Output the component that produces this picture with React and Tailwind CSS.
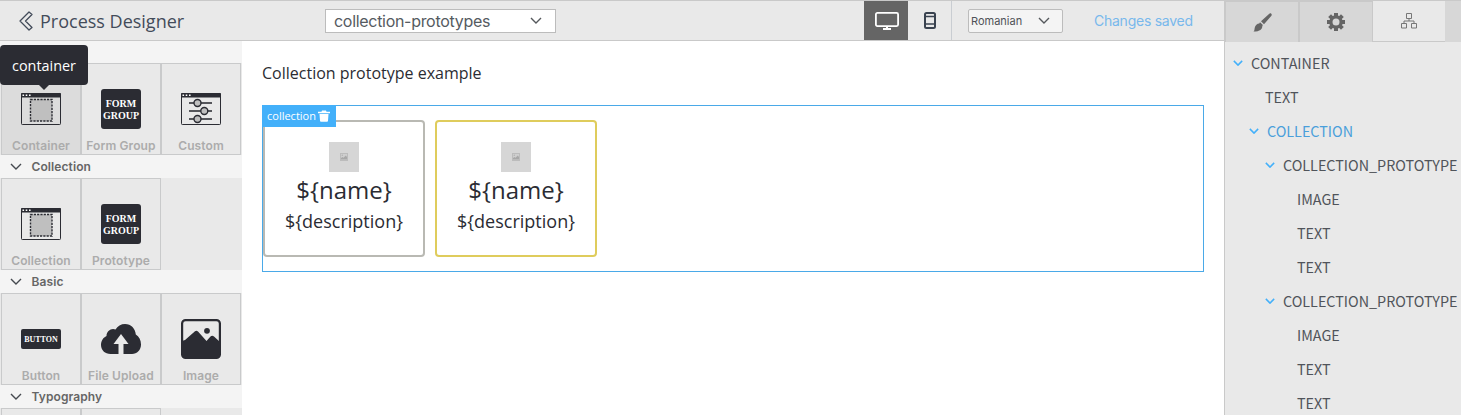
import React from "react";

function Chevron({ className = "", w = 12, h = 7, sw = 1.4 }) {
  return (
    <svg width={w} height={h} viewBox="0 0 12 7" fill="none" className={"shrink-0 " + className} preserveAspectRatio="none">
      <path d="M1 1l5 5 5-5" stroke="currentColor" strokeWidth={sw} />
    </svg>
  );
}

function WindowFrame({ children }) {
  return (
    <svg width="40" height="40" viewBox="0 0 40 40" fill="none">
      <rect x="0.5" y="4.5" width="39" height="31" rx="0.8" stroke="#2b2c33" />
      <rect x="0" y="4" width="40" height="4.6" rx="1" fill="#2b2c33" />
      <path d="M1.5 6.2h1.6M4.7 6.2h1.6M8 6.2h1.6" stroke="#fff" strokeWidth="1.4" />
      {children}
    </svg>
  );
}

function ContainerIcon() {
  return (
    <WindowFrame>
      <rect x="9.5" y="10.5" width="21.5" height="21.5" fill="#bfbfbf" stroke="#2b2c33" strokeWidth="1.4" strokeDasharray="2.2 1.1" />
    </WindowFrame>
  );
}

function CustomIcon() {
  return (
    <WindowFrame>
      <path d="M8 14h23M8 22h23M8 30h23" stroke="#55565b" strokeWidth="1.9" />
      <g fill="#bfbfbf" stroke="#2b2c33" strokeWidth="1.4">
        <circle cx="16.5" cy="14" r="3.5" />
        <circle cx="23.3" cy="22" r="3.5" />
        <circle cx="16.5" cy="30" r="3.5" />
      </g>
    </WindowFrame>
  );
}

function FormGroupIcon() {
  return (
    <div className="flex h-10 w-10 flex-col items-center justify-center rounded-[3px] bg-[#2b2c33] pt-[2px] font-['Liberation_Serif',serif] text-[10px] leading-3 font-bold text-white">
      <span>FORM</span>
      <span>GROUP</span>
    </div>
  );
}

function ButtonIcon() {
  return (
    <div className="flex h-5 w-10 items-center justify-center rounded-[2px] bg-[#2b2c33] pt-px font-['Liberation_Serif',serif] text-[8px] leading-5 font-bold text-white">
      BUTTON
    </div>
  );
}

function UploadIcon() {
  return (
    <svg width="40" height="40" viewBox="0 0 40 40">
      <path
        fill="#2b2c33"
        d="M9.500 35C4 35 0 31 0 26c0-4.300 2.300-7.500 5.500-9C5.500 12 10.500 8.500 14.500 10.500 16.500 7 20 5 24 5c6 0 10.500 4.700 10.800 10.500C38 17.500 40 21 40 25.500 40 31 36 35 31 35h-8.500V25H27.500L20 15l-7.500 10h5V35z"
      />
    </svg>
  );
}

function ImageIcon() {
  return (
    <svg width="40" height="40" viewBox="0 0 40 40">
      <rect x="1.100" y="1.100" width="37.800" height="37.800" rx="3.500" fill="none" stroke="#2b2c33" strokeWidth="2.200" />
      <path fill="#2b2c33" d="M1 22l3-1L14 12.300q1.500-1 3 .3L25.500 22l4-4.500q1.700-1.500 3.500 0L39 23v12q0 4-4 4H5q-4 0-4-4z" />
      <circle cx="26" cy="11.800" r="2.900" fill="#2b2c33" />
    </svg>
  );
}

function Tile({ label, icon, active }) {
  return (
    <div
      className={
        "flex h-[92px] w-20 shrink-0 flex-col items-center border border-[#c9cacb] " +
        (active ? "bg-[#dcdcdc]" : "bg-[#e9e9e9]")
      }
    >
      <div className="mt-[25px] flex h-10 w-10 items-center justify-center">{icon}</div>
      <div className="mt-[9px] text-[12px] leading-4 font-semibold tracking-[0.1px] whitespace-nowrap text-[#acacac]">{label}</div>
    </div>
  );
}

function Category({ name }) {
  return (
    <div className="flex h-[23px] items-center pl-[10px] text-[#666]">
      <Chevron w={12} h={7} className="text-[#45494f]" />
      <span className="ml-[9.5px] text-[12px] leading-4 font-semibold tracking-[0.1px]">{name}</span>
    </div>
  );
}

function TileRow({ children }) {
  return <div className="flex h-[92px] bg-[#e9e9e9] pl-px">{children}</div>;
}

function Prototype({ border }) {
  return (
    <div className={"flex h-[137px] w-[162px] flex-col items-center rounded-[4px] border-2 pt-5 text-[#2b2c33] " + border}>
      <div className="flex h-[30px] w-[30px] items-center justify-center bg-[#d6d6d6]">
        <svg width="8" height="8" viewBox="0 0 8 8">
          <rect x="0.500" y="0.500" width="7" height="7" fill="#cfcfcf" stroke="#bcbcbc" />
          <path d="M1 6.500V5l1.500-1 1 .8L5.800 2.500 7 4v2.500z" fill="#a8a8a8" />
          <circle cx="2.300" cy="2.300" r="0.700" fill="#b0b0b0" />
        </svg>
      </div>
      <div className="mt-px text-[24px] leading-[34px]">{"${name}"}</div>
      <div className="mt-px text-[18px] leading-[26px]">{"${description}"}</div>
    </div>
  );
}

const tree = [
  { label: "CONTAINER", pad: "pl-[8px]", open: true },
  { label: "TEXT", pad: "pl-[40px]" },
  { label: "COLLECTION", pad: "pl-[24px]", open: true, active: true },
  { label: "COLLECTION_PROTOTYPE", pad: "pl-[40px]", open: true },
  { label: "IMAGE", pad: "pl-[72px]" },
  { label: "TEXT", pad: "pl-[72px]" },
  { label: "TEXT", pad: "pl-[72px]" },
  { label: "COLLECTION_PROTOTYPE", pad: "pl-[40px]", open: true },
  { label: "IMAGE", pad: "pl-[72px]" },
  { label: "TEXT", pad: "pl-[72px]" },
  { label: "TEXT", pad: "pl-[72px]" },
];

function Header() {
  return (
    <header className="flex h-[41px] items-center border-y border-[#c9c9c9] bg-[#e9e9e9]">
      <div className="flex w-[325px] items-center pl-[19px]">
        <svg width="14" height="20" viewBox="0 0 14 20" fill="none">
          <path d="M10 1L1 10l9 9 3-2.500L6.500 10 13 3.500z" stroke="#434c5a" strokeWidth="1.300" strokeLinejoin="round" />
        </svg>
        <span className="ml-[7px] font-['Open_Sans',sans-serif] text-[18px] leading-6 text-[#434c5a]">Process Designer</span>
      </div>
      <div className="flex h-6 w-[231px] items-center justify-between border border-[#bcbcbc] bg-white pr-[13px] pl-2">
        <span className="text-[16px] leading-5 tracking-[-0.3px] text-[#555b61]">collection-prototypes</span>
        <Chevron className="text-[#55585c]" />
      </div>
      <div className="ml-[308px] flex h-[39px] w-11 items-center justify-center bg-[#656565] pl-[2px]">
        <svg width="24" height="18" viewBox="0 0 24 18" fill="none" className="mt-px">
          <rect x="0.900" y="0.900" width="22.200" height="13.200" rx="1.500" stroke="#fff" strokeWidth="1.800" />
          <path d="M12 14v2.500M8 17h8" stroke="#fff" strokeWidth="2" />
        </svg>
      </div>
      <div className="flex h-[39px] w-11 items-center justify-center border-r border-[#c9cdd2]">
        <svg width="12" height="17" viewBox="0 0 12 17" fill="none">
          <rect x="1" y="1" width="10" height="15" rx="1.500" stroke="#39424f" strokeWidth="2" />
          <path d="M1 4.500h10M1 12h10" stroke="#39424f" strokeWidth="1.300" />
        </svg>
      </div>
      <div className="ml-4 flex h-6 w-[95px] items-center justify-between rounded-[2px] border border-[#bcbcbc] bg-[#f4f4f4] pr-3 pl-[2px]">
        <span className="text-[11px] leading-4 text-[#4f5257]">Romanian</span>
        <Chevron w={12} className="text-[#55585c]" />
      </div>
      <div className="ml-[31px] text-[14px] leading-5 tracking-[-0.25px] text-[#78b8ec]">Changes saved</div>
    </header>
  );
}

export default function App() {
  return (
    <div className="flex h-[415px] w-[1461px] overflow-hidden bg-white font-['Inter',sans-serif]">
      <div className="flex w-[1224px] shrink-0 flex-col">
        <Header />
        <div className="flex min-h-0 flex-1">
          <aside className="relative h-[374px] w-[242px] shrink-0 overflow-hidden bg-[#f4f4f4] pt-[22px]">
            <TileRow>
              <Tile label="Container" icon={<ContainerIcon />} active />
              <Tile label="Form Group" icon={<FormGroupIcon />} />
              <Tile label="Custom" icon={<CustomIcon />} />
            </TileRow>
            <Category name="Collection" />
            <TileRow>
              <Tile label="Collection" icon={<ContainerIcon />} />
              <Tile label="Prototype" icon={<FormGroupIcon />} />
            </TileRow>
            <Category name="Basic" />
            <TileRow>
              <Tile label="Button" icon={<ButtonIcon />} />
              <Tile label="File Upload" icon={<UploadIcon />} />
              <Tile label="Image" icon={<ImageIcon />} />
            </TileRow>
            <Category name="Typography" />
            <TileRow>
              <Tile />
              <Tile />
            </TileRow>
            <div className="absolute top-1 left-0 flex h-10 w-[88px] items-center justify-center rounded-[4px] bg-[#2b2c33] pt-[2px] font-['Open_Sans',sans-serif] text-[14.4px] text-white">
              container
              <svg width="10" height="5" viewBox="0 0 10 5" className="absolute top-10 left-[39px]">
                <path d="M0 0h10L5 5z" fill="#2b2c33" />
              </svg>
            </div>
          </aside>
          <main className="w-[982px] pt-5 pl-5 font-['Open_Sans',sans-serif]">
            <h1 className="text-[16px] leading-6 text-[#2b2c33]">Collection prototype example</h1>
            <section className="relative mt-5 flex h-[167px] w-[942px] gap-[10px] border border-[#4aa9e8] pt-[14px]">
              <Prototype border="border-[#b9b9b3]" />
              <Prototype border="border-[#dfcc5c]" />
              <div className="absolute -top-px -left-px flex h-[22px] w-[74px] items-center bg-[#43b0fa] pl-[5px] text-[11px] text-white">
                collection
                <svg width="12" height="12" viewBox="0 0 12 12" className="ml-[2px]">
                  <path fill="#fff" d="M4 0.500h4l.5 1.200H12v1.600H0V1.700h3.500zM1.500 4h9l-.5 6.800q0 1-1 1H3q-1 0-1-1z" />
                </svg>
              </div>
            </section>
          </main>
        </div>
      </div>
      <aside className="flex w-[237px] shrink-0 flex-col border-t border-l border-[#c9c9c9] bg-[#e9e9e9]">
        <div className="flex h-[41px] shrink-0 bg-[#d7d7d7]">
          <div className="flex w-[74px] items-center justify-center border-x border-t border-[#c9c9c9]">
            <svg width="19" height="19" viewBox="0 0 19 19" fill="#656565">
              <path d="M18.300.7c.7.600.5 1.500-.1 2.300L11 11.200 8 8.300 16 .9c.7-.6 1.700-.8 2.300-.2zM7 9.300l2.900 2.800-.6.8c.2 3-2.300 5.600-8.800 5.600 1.300-1 .8-2.300 1.300-4 .5-2.300 2.300-3.900 4.500-4z" />
            </svg>
          </div>
          <div className="flex w-[74px] items-center justify-center border-x border-t border-[#c9c9c9]">
            <svg width="18" height="18" viewBox="0 0 18 18">
              <g stroke="#656565" strokeWidth="4">
                <path d="M9 0v18M0 9h18M2.600 2.600l12.800 12.800M15.400 2.600L2.600 15.400" />
              </g>
              <circle cx="9" cy="9" r="6.800" fill="#656565" />
              <circle cx="9" cy="9" r="3.500" fill="#d7d7d7" />
            </svg>
          </div>
          <div className="flex w-[72px] items-center justify-center border-b border-[#c9c9c9] bg-[#e9e9e9]">
            <svg width="16" height="16" viewBox="0 0 16 16" fill="none" stroke="#777">
              <path d="M5.500.5h5v5h-5zM.5 10.500h5v4.500h-5zM10.500 10.500h5v4.500h-5zM8 5.500V8M3 10.500V8h10v2.500" />
            </svg>
          </div>
        </div>
        <div className="pt-1 font-['Noto_Sans_CJK_SC',sans-serif] text-[14.35px]">
          {tree.map((n, i) => (
            <div
              key={i}
              className={"flex h-[34px] items-center leading-5 whitespace-nowrap " + n.pad + (n.active ? " text-[#4a9fdb]" : " text-[#50545a]")}
            >
              {n.open && <Chevron w={10} h={6} sw={1.8} className="mr-2 text-[#43b0fa]" />}
              {n.label}
            </div>
          ))}
        </div>
      </aside>
    </div>
  );
}
